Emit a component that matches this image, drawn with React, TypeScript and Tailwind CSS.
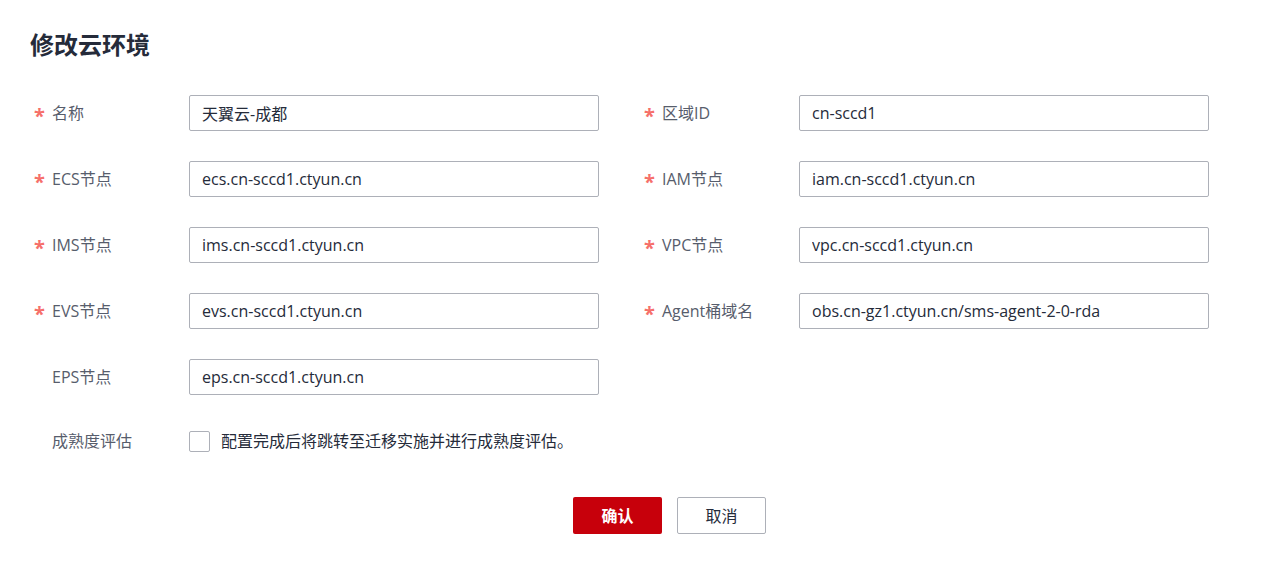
const font = "font-['Open_Sans','Noto_Sans_CJK_SC',sans-serif]";

type Field = { label: string; value: string; required?: boolean };

const left: Field[] = [
  { label: "名称", value: "天翼云-成都", required: true },
  { label: "ECS节点", value: "ecs.cn-sccd1.ctyun.cn", required: true },
  { label: "IMS节点", value: "ims.cn-sccd1.ctyun.cn", required: true },
  { label: "EVS节点", value: "evs.cn-sccd1.ctyun.cn", required: true },
  { label: "EPS节点", value: "eps.cn-sccd1.ctyun.cn" },
];

const right: Field[] = [
  { label: "区域ID", value: "cn-sccd1", required: true },
  { label: "IAM节点", value: "iam.cn-sccd1.ctyun.cn", required: true },
  { label: "VPC节点", value: "vpc.cn-sccd1.ctyun.cn", required: true },
  { label: "Agent桶域名", value: "obs.cn-gz1.ctyun.cn/sms-agent-2-0-rda", required: true },
];

function Row({ field }: { field: Field }) {
  return (
    <div className="flex h-9 w-[610px] items-center">
      <div className="flex w-[159px] items-center pl-[4px] text-[16px] text-[#575d6c]">
        <span className="w-[18px] pt-[5px] text-[20px] font-bold leading-none text-[#f66f6a]">{field.required ? "*" : ""}</span>
        <span>{field.label}</span>
      </div>
      <input
        readOnly
        value={field.value}
        className="h-9 w-[410px] rounded-[2px] border border-[#adb0b8] px-[12px] text-[16px] text-[#252b3a] outline-none"
      />
    </div>
  );
}

export default function App() {
  return (
    <div className={`${font} h-[564px] w-[1280px] bg-white pl-[30px] pt-[30px]`}>
      <h1 className="text-[24px] font-bold leading-[30px] text-[#252b3a]">修改云环境</h1>

      <div className="mt-[35px] flex">
        <div className="flex flex-col gap-[30px]">
          {left.map((f) => <Row key={f.label} field={f} />)}
        </div>
        <div className="flex flex-col gap-[30px]">
          {right.map((f) => <Row key={f.label} field={f} />)}
        </div>
      </div>

      <div className="mt-[35px] flex h-[22px] items-center">
        <div className="w-[159px] pl-[22px] text-[16px] text-[#575d6c]">成熟度评估</div>
        <span className="h-[21px] w-[21px] rounded-[2px] border border-[#adb0b8]" />
        <span className="ml-[11px] text-[16px] text-[#252b3a]">配置完成后将跳转至迁移实施并进行成熟度评估。</span>
      </div>

      <div className="ml-[543px] mt-[45px] flex gap-[15px]">
        <button className="h-[37px] w-[89px] rounded-[2px] bg-[#c7000b] text-[16px] font-bold text-white">确认</button>
        <button className="h-[37px] w-[89px] rounded-[2px] border border-[#adb0b8] bg-white text-[16px] text-[#252b3a]">取消</button>
      </div>
    </div>
  );
}
